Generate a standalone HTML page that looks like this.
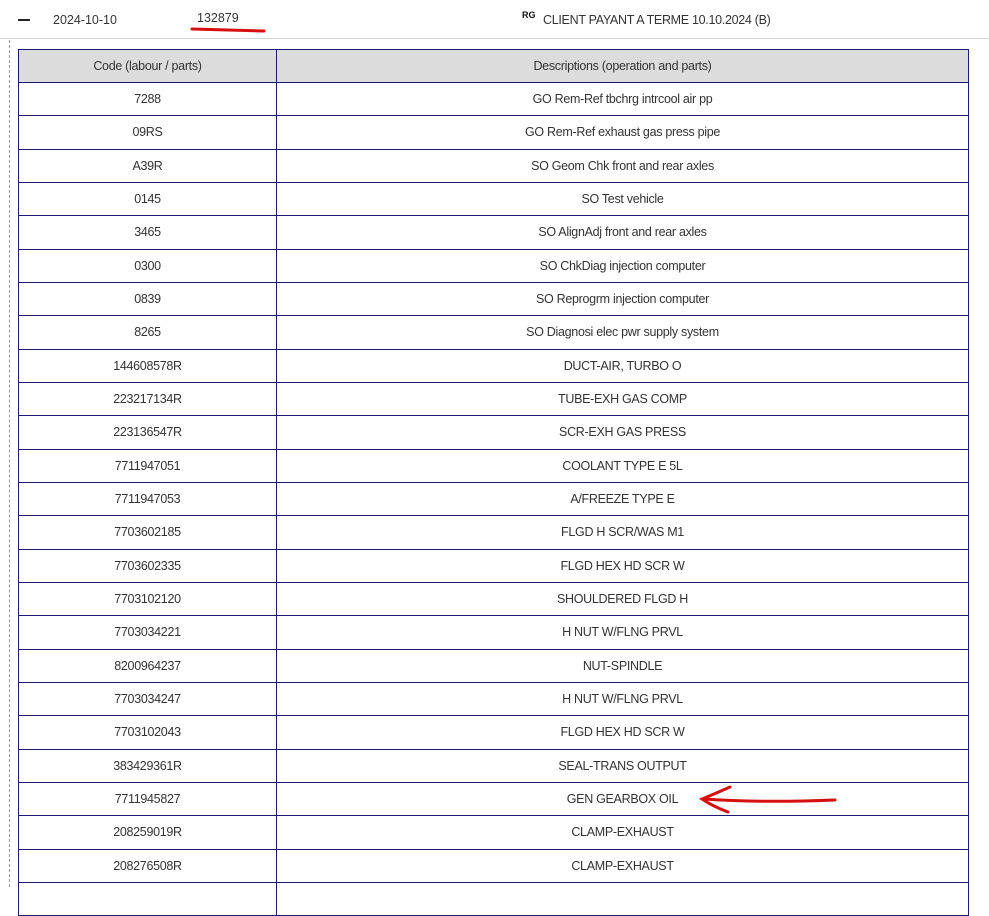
<!DOCTYPE html>
<html><head><meta charset="utf-8"><style>
*{margin:0;padding:0;box-sizing:border-box}
body{width:989px;height:887px;overflow:hidden;background:#fff;font-family:"Liberation Sans",sans-serif;color:#333;font-size:12.5px;position:relative}
.a{position:absolute;white-space:nowrap}
table{position:absolute;left:18px;top:49px;width:950px;border-collapse:collapse;table-layout:fixed}
td{border:1px solid #1a1a6e;text-align:center;height:33.33px;padding:0;white-space:nowrap;letter-spacing:-0.3px}
tr.h td{background:#dcdcdc;height:33px}
</style></head><body>
<div class="a" style="left:18px;top:19px;width:12px;height:2px;background:#222"></div>
<div class="a" style="left:53px;top:13px;">2024-10-10</div>
<div class="a" style="left:197px;top:11px;">132879</div>
<div class="a" style="left:522px;top:10px;font-size:9px;font-weight:bold;color:#111">RG</div>
<div class="a" style="left:543px;top:13px;letter-spacing:-0.3px">CLIENT PAYANT A TERME 10.10.2024 (B)</div>
<div class="a" style="left:0;top:38px;width:989px;height:1px;background:#d4d4d4"></div>
<div class="a" style="left:9px;top:40px;height:847px;border-left:1px dashed #999"></div>
<table>
<colgroup><col style="width:258px"><col style="width:692px"></colgroup>
<tr class="h"><td>Code (labour / parts)</td><td>Descriptions (operation and parts)</td></tr>
<tr><td>7288</td><td>GO Rem-Ref tbchrg intrcool air pp</td></tr>
<tr><td>09RS</td><td>GO Rem-Ref exhaust gas press pipe</td></tr>
<tr><td>A39R</td><td>SO Geom Chk front and rear axles</td></tr>
<tr><td>0145</td><td>SO Test vehicle</td></tr>
<tr><td>3465</td><td>SO AlignAdj front and rear axles</td></tr>
<tr><td>0300</td><td>SO ChkDiag injection computer</td></tr>
<tr><td>0839</td><td>SO Reprogrm injection computer</td></tr>
<tr><td>8265</td><td>SO Diagnosi elec pwr supply system</td></tr>
<tr><td>144608578R</td><td>DUCT-AIR, TURBO O</td></tr>
<tr><td>223217134R</td><td>TUBE-EXH GAS COMP</td></tr>
<tr><td>223136547R</td><td>SCR-EXH GAS PRESS</td></tr>
<tr><td>7711947051</td><td>COOLANT TYPE E 5L</td></tr>
<tr><td>7711947053</td><td>A/FREEZE TYPE E</td></tr>
<tr><td>7703602185</td><td>FLGD H SCR/WAS M1</td></tr>
<tr><td>7703602335</td><td>FLGD HEX HD SCR W</td></tr>
<tr><td>7703102120</td><td>SHOULDERED FLGD H</td></tr>
<tr><td>7703034221</td><td>H NUT W/FLNG PRVL</td></tr>
<tr><td>8200964237</td><td>NUT-SPINDLE</td></tr>
<tr><td>7703034247</td><td>H NUT W/FLNG PRVL</td></tr>
<tr><td>7703102043</td><td>FLGD HEX HD SCR W</td></tr>
<tr><td>383429361R</td><td>SEAL-TRANS OUTPUT</td></tr>
<tr><td>7711945827</td><td>GEN GEARBOX OIL</td></tr>
<tr><td>208259019R</td><td>CLAMP-EXHAUST</td></tr>
<tr><td>208276508R</td><td>CLAMP-EXHAUST</td></tr>
<tr><td></td><td></td></tr>
</table>
<svg class="a" style="left:0;top:0" width="989" height="887">
<path d="M192 29 Q230 30 264 31" stroke="#d61010" stroke-width="3" fill="none" stroke-linecap="round"/>
<path d="M730 787 Q712 795 702 799 Q712 806 728 812 M704 799 Q760 803 835 800" stroke="#d61010" stroke-width="3" fill="none" stroke-linecap="round"/>
</svg>
</body></html>
